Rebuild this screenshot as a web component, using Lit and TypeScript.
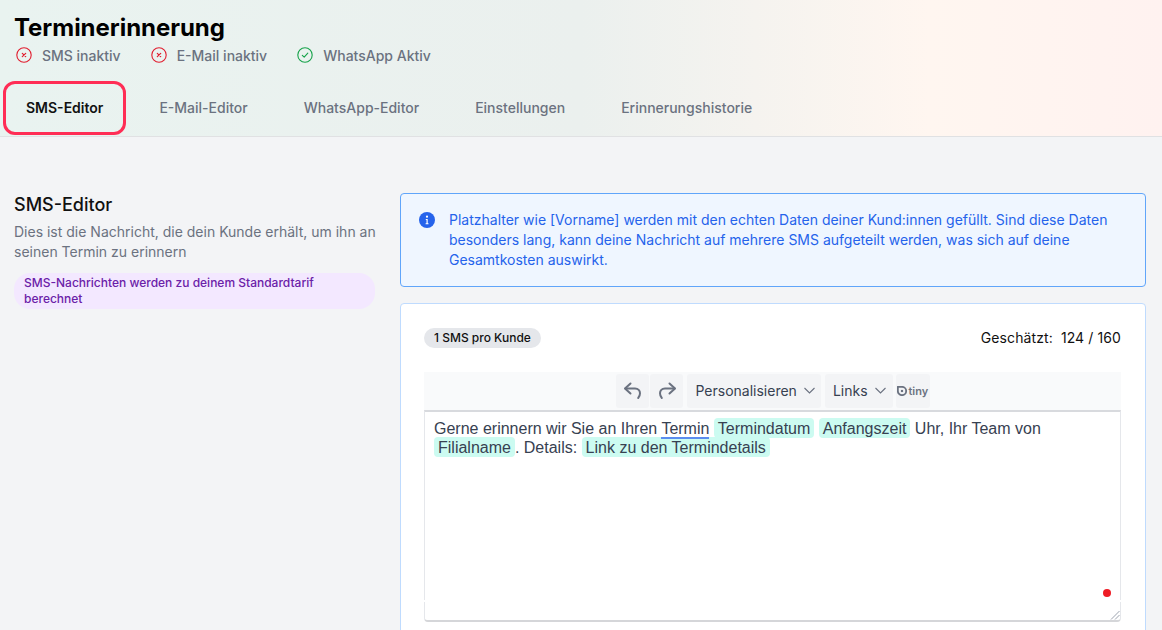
import { LitElement, html, css, svg } from "lit";
import { customElement } from "lit/decorators.js";

const bad = svg`<circle cx="8" cy="8" r="7.2" fill="none" stroke="#e11d2e" stroke-width="1.1"/><path d="M6.3 6.3l3.4 3.4M9.7 6.3l-3.4 3.4" stroke="#e11d2e" stroke-width="1.2" stroke-linecap="round"/>`;
const good = svg`<circle cx="8" cy="8" r="7.2" fill="none" stroke="#16a34a" stroke-width="1.1"/><path d="M5.3 8.3l1.9 1.9 3.6-4" fill="none" stroke="#16a34a" stroke-width="1.1" stroke-linecap="round" stroke-linejoin="round"/>`;
const chevron = svg`<path d="M.5 3l5 5 5-5"/>`;

@customElement("app-root")
export class AppRoot extends LitElement {
  static styles = css`
    :host { display: block; height: 630px; overflow: hidden; background: #f3f4f6; font-family: Inter, "Liberation Sans", sans-serif; }
    * { box-sizing: border-box; }
    header { height: 137px; border-bottom: 1px solid #e0e1e3; padding: 14px 0 0 3px;
      background: linear-gradient(90deg, #e9f3f0 0%, #ebf0ee 50%, #fff6f0 80%, #fff2f0 100%); }
    h1 { margin: 0 0 0 11px; font-size: 24px; line-height: 28px; font-weight: 700; color: #000; letter-spacing: -0.04px; }
    .status { display: flex; gap: 30px; margin: 2px 0 0 13px; height: 22px; align-items: center; }
    .st { display: flex; align-items: center; gap: 10px; font-size: 14px; font-weight: 500; color: #6b7280; }
    .st svg { width: 16px; height: 16px; display: block; }
    .tabs { display: flex; margin-top: 15px; gap: 6px; }
    .tab { height: 54px; padding: 0 22px 1px; display: flex; align-items: center; font-size: 14px; font-weight: 500; color: #6b7280; white-space: nowrap; border: 3px solid transparent; }
    .tab.on { color: #111; font-weight: 600; border-color: #ff2d55; border-radius: 12px; padding: 0 20px 1px; margin-right: 2px; }
    main { display: flex; padding: 56px 16px 0 14px; gap: 25px; align-items: flex-start; }
    .left { width: 361px; flex: none; }
    h2 { margin: 0; font-size: 18px; line-height: 24px; font-weight: 500; color: #111; }
    .desc { margin: 5px -4px 0 0; font-size: 14px; line-height: 20px; color: #6b7280; }
    .tariff { margin-top: 11px; padding: 2px 10px; background: #f3e8ff; border-radius: 16px; font-size: 12px; line-height: 16px; font-weight: 500; color: #6b21a8; }
    .right { flex: 1; min-width: 0; }
    .info { display: flex; gap: 14px; height: 94px; border: 1px solid #60a5fa; border-radius: 4px; background: #eff6ff; padding: 16px 18px; color: #2563eb; font-size: 14px; line-height: 20px; }
    .info svg { width: 16px; height: 16px; flex: none; margin-top: 2px; }
    .info p { margin: 0; }
    .card { margin-top: 16px; height: 400px; background: #fff; border: 1px solid #bfdbfe; border-radius: 4px; padding: 24px 24px 24px 23px; }
    .top { display: flex; justify-content: space-between; align-items: center; height: 20px; }
    .pill { background: #e5e7eb; color: #111; border-radius: 10px; font-size: 12px; line-height: 20px; font-weight: 500; padding: 0 10px; }
    .est { font-size: 14px; color: #111; white-space: pre; letter-spacing: 0.1px; margin-top: -1px; }
    .toolbar { margin-top: 24px; height: 38px; background: #f9fafb; display: flex; justify-content: center; gap: 4px; padding: 2px 0 0 1px; }
    .group { display: flex; gap: 1px; }
    .b { height: 34px; background: #f3f4f6; border-radius: 3px; display: flex; align-items: center; justify-content: center; font-size: 14px; color: #374151; }
    .b.ic { width: 33px; }
    .b.ic svg { width: 24px; height: 24px; }
    .b.dd { padding: 0 6px 1px 8px; gap: 7px; }
    .b.dd.links { padding-right: 7px; }
    .b.dd svg { width: 11px; height: 11px; }
    .b.tiny { width: 34px; margin-left: -1px; gap: 1.5px; font-size: 11px; font-weight: 600; color: #6b7280; }
    .b.tiny svg { width: 10px; height: 10px; flex: none; }
    .editor { position: relative; height: 212px; border: 1px solid #e5e7eb; border-top: 2px solid #d8dade; border-bottom: 2px solid #d5d6d9; border-radius: 0 0 4px 4px; padding: 7px 9px; font-family: "Liberation Sans", Arial, sans-serif; font-size: 16px; line-height: 19px; color: #374151; }
    .editor u { position: relative; text-decoration: none; border-bottom: 2px solid #5b8def; }
    mark { background: #ccfbf1; color: #374151; border-radius: 4px; padding: 2px 4px 1px; }
    .dot { position: absolute; right: 9px; bottom: 23px; width: 8px; height: 8px; border-radius: 50%; background: #ee1c25; }
    .grip { position: absolute; right: 0; bottom: 0; width: 10px; height: 10px; }
    .notch { position: absolute; bottom: 18px; width: 1px; height: 2px; background: #fff; }
    .notch.l { left: -1px; }
    .notch.r { right: -1px; }
  `;
  render() {
    return html`
      <header>
        <h1>Terminerinnerung</h1>
        <div class="status">
          <span class="st"><svg viewBox="0 0 16 16">${bad}</svg>SMS inaktiv</span>
          <span class="st"><svg viewBox="0 0 16 16">${bad}</svg>E-Mail inaktiv</span>
          <span class="st"><svg viewBox="0 0 16 16">${good}</svg>WhatsApp Aktiv</span>
        </div>
        <nav class="tabs">
          <div class="tab on">SMS-Editor</div>
          <div class="tab">E-Mail-Editor</div>
          <div class="tab">WhatsApp-Editor</div>
          <div class="tab">Einstellungen</div>
          <div class="tab">Erinnerungshistorie</div>
        </nav>
      </header>
      <main>
        <section class="left">
          <h2>SMS-Editor</h2>
          <p class="desc">Dies ist die Nachricht, die dein Kunde erhält, um ihn an seinen Termin zu erinnern</p>
          <div class="tariff">SMS-Nachrichten werden zu deinem Standardtarif berechnet</div>
        </section>
        <section class="right">
          <div class="info">
            <svg viewBox="0 0 16 16"><circle cx="8" cy="8" r="8" fill="#2563eb"/><circle cx="8" cy="4.7" r="1.1" fill="#fff"/><path d="M6.8 7h1.9v4.2h.8v1H6.6v-1h.9V8h-.7z" fill="#fff"/></svg>
            <p>Platzhalter wie [Vorname] werden mit den echten Daten deiner Kund:innen gefüllt. Sind diese Daten besonders lang, kann deine Nachricht auf mehrere SMS aufgeteilt werden, was sich auf deine Gesamtkosten auswirkt.</p>
          </div>
          <div class="card">
            <div class="top"><span class="pill">1 SMS pro Kunde</span><span class="est">Geschätzt:  124 / 160</span></div>
            <div class="toolbar">
              <div class="group">
                <div class="b ic"><svg viewBox="0 0 24 24" fill="none" stroke="#6b7280" stroke-width="2" stroke-linecap="round" stroke-linejoin="round"><path d="M9.5 4.5L4 9.5l5.5 5"/><path d="M4.5 9.5H14c3.2 0 5 2.2 5 4.8 0 1.9-.8 3.6-1.8 4.7"/></svg></div>
                <div class="b ic"><svg viewBox="0 0 24 24" fill="none" stroke="#6b7280" stroke-width="2" stroke-linecap="round" stroke-linejoin="round"><path d="M14.5 4.5L20 9.5l-5.5 5"/><path d="M19.5 9.5H10c-3.2 0-5 2.2-5 4.8 0 1.9.8 3.6 1.8 4.7"/></svg></div>
              </div>
              <div class="b dd">Personalisieren<svg viewBox="0 0 11 11" fill="none" stroke="#6b7280" stroke-width="1.1">${chevron}</svg></div>
              <div class="b dd links">Links<svg viewBox="0 0 11 11" fill="none" stroke="#6b7280" stroke-width="1.1">${chevron}</svg></div>
              <div class="b tiny"><svg viewBox="0 0 12 12"><path d="M6 1a5 5 0 1 1-5 5V1z" fill="none" stroke="#6b7280" stroke-width="2.2" stroke-linejoin="round"/><rect x="4.7" y="4.7" width="2.6" height="2.6" fill="#6b7280"/></svg>tiny</div>
            </div>
            <div class="editor">
              Gerne erinnern wir Sie an Ihren <u>Termin</u> <mark>Termindatum</mark> <mark>Anfangszeit</mark> Uhr, Ihr Team von <mark>Filialname</mark>. Details: <mark>Link zu den Termindetails</mark>
              <span class="dot"></span>
              <span class="notch l"></span><span class="notch r"></span>
              <svg class="grip" viewBox="0 0 10 10" stroke="#9ca3af" stroke-width="1"><path d="M1 9.5L9.5 1M5 9.5L9.5 5"/></svg>
            </div>
          </div>
        </section>
      </main>
    `;
  }
}
